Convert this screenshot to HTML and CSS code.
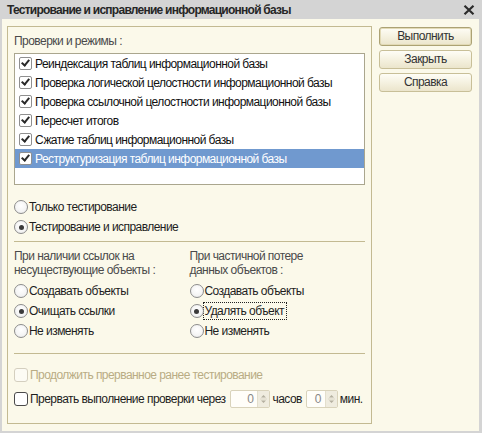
FILE: index.html
```html
<!DOCTYPE html>
<html lang="ru">
<head>
<meta charset="utf-8">
<title>Тестирование и исправление информационной базы</title>
<link rel="stylesheet" href="styles.css">
</head>
<body>
<div class="window">
  <div class="titlebar">
    <span class="title">Тестирование и исправление информационной базы</span>
    <svg class="close" width="12" height="10" viewBox="0 0 12 10"><path d="M1.5 0.8 L10.5 9.2 M10.5 0.8 L1.5 9.2" stroke="#2b2b2b" stroke-width="2.2" fill="none"/></svg>
  </div>
  <div class="body">
    <div class="panel">
      <div class="label">Проверки и режимы :</div>
      <div class="list">
        <div class="row"><span class="cb on"></span><span>Реиндексация таблиц информационной базы</span></div>
        <div class="row"><span class="cb on"></span><span>Проверка логической целостности информационной базы</span></div>
        <div class="row"><span class="cb on"></span><span>Проверка ссылочной целостности информационной базы</span></div>
        <div class="row"><span class="cb on"></span><span>Пересчет итогов</span></div>
        <div class="row"><span class="cb on"></span><span>Сжатие таблиц информационной базы</span></div>
        <div class="row selected"><span class="cb on"></span><span>Реструктуризация таблиц информационной базы</span></div>
      </div>
      <div class="modes">
        <div class="radio"><span class="rb"></span><span>Только тестирование</span></div>
        <div class="radio"><span class="rb on"></span><span>Тестирование и исправление</span></div>
      </div>
      <div class="sep"></div>
      <div class="cols">
        <div class="col">
          <div class="label2">При наличии ссылок на<br>несуществующие объекты :</div>
          <div class="radios">
            <div class="radio"><span class="rb"></span><span>Создавать объекты</span></div>
            <div class="radio"><span class="rb on"></span><span>Очищать ссылки</span></div>
            <div class="radio"><span class="rb"></span><span>Не изменять</span></div>
          </div>
        </div>
        <div class="col">
          <div class="label2">При частичной потере<br>данных объектов :</div>
          <div class="radios">
            <div class="radio"><span class="rb"></span><span>Создавать объекты</span></div>
            <div class="radio"><span class="rb on"></span><span class="focus">Удалять объект</span></div>
            <div class="radio"><span class="rb"></span><span>Не изменять</span></div>
          </div>
        </div>
      </div>
      <div class="sep sep2"></div>
      <div class="check disabled"><span class="box"></span><span>Продолжить прерванное ранее тестирование</span></div>
      <div class="check limit">
        <span class="box"></span><span>Прервать выполнение проверки через</span>
        <span class="spin w40"><span class="val">0</span><span class="arrows"><svg width="11" height="16" viewBox="0 0 11 16"><path d="M3 6.5 L5.5 4 L8 6.5 Z M3 9.5 L5.5 12 L8 9.5 Z" fill="#b4b0a0"/><path d="M2 8 H9" stroke="#dcd8c8" stroke-width="1"/></svg></span></span>
        <span class="unit">часов</span>
        <span class="spin w32"><span class="val">0</span><span class="arrows"><svg width="11" height="16" viewBox="0 0 11 16"><path d="M3 6.5 L5.5 4 L8 6.5 Z M3 9.5 L5.5 12 L8 9.5 Z" fill="#b4b0a0"/><path d="M2 8 H9" stroke="#dcd8c8" stroke-width="1"/></svg></span></span>
        <span class="unit">мин.</span>
      </div>
    </div>
    <div class="buttons">
      <div class="btn default">Выполнить</div>
      <div class="btn">Закрыть</div>
      <div class="btn">Справка</div>
    </div>
  </div>
</div>
</body>
</html>
```
FILE: styles.css
```css
html, body {
  margin: 0;
  padding: 0;
  background: #d4d4d4;
}
body {
  font-family: "Liberation Sans", Arial, sans-serif;
  font-size: 12px;
  letter-spacing: -0.55px;
  color: #1e1e1e;
}
.window {
  width: 482px;
  height: 433px;
  box-sizing: border-box;
  background: #d4d4d4;
  display: flex;
  flex-direction: column;
  padding: 0 3px 2px 2px;
}
.titlebar {
  height: 19px;
  flex: none;
  display: flex;
  align-items: center;
  justify-content: space-between;
  padding: 0 7px 0 7px;
  margin: 0 -3px 0 -2px;
}
.title {
  font-weight: bold;
  font-size: 12px;
  letter-spacing: -0.75px;
  color: #262626;
  padding-top: 1px;
}
.close {
  display: block;
  margin-top: 1px;
}
.body {
  flex: 1;
  background: #fbf9ea;
  display: flex;
  align-items: flex-start;
  padding: 7px 0 0 5px;
}
.panel {
  width: 365px;
  height: 398px;
  box-sizing: border-box;
  border: 1px solid #c3ba92;
  padding: 7px 6px 0 6px;
}
.label {
  height: 14px;
  line-height: 14px;
  color: #4a4a4a;
  margin-bottom: 5px;
}
.list {
  height: 132px;
  box-sizing: border-box;
  border: 1px solid #aaa68e;
  background: #fff;
}
.row {
  height: 19px;
  display: flex;
  align-items: center;
  color: #111;
  white-space: nowrap;
}
.row.selected {
  background: #7099cf;
  color: #fff;
}
.cb {
  width: 11px;
  height: 11px;
  border: 1px solid #8f8f8f;
  border-radius: 2px;
  background: #fff;
  margin: 0 3px 0 4px;
  flex: none;
  position: relative;
}
.cb.on::after {
  content: "";
  position: absolute;
  left: 3px;
  top: 0px;
  width: 3px;
  height: 6px;
  border: solid #2a2a2a;
  border-width: 0 2px 2px 0;
  transform: rotate(40deg);
}
.modes {
  margin-top: 12px;
}
.radio {
  height: 20px;
  display: flex;
  align-items: center;
  white-space: nowrap;
  color: #1e1e1e;
}
.rb {
  width: 12px;
  height: 12px;
  border: 1px solid #8c8c8c;
  border-radius: 50%;
  background: radial-gradient(circle at 50% 40%, #ffffff 0, #f4f4f4 60%, #e2e2e2 100%);
  margin-right: 1px;
  flex: none;
  position: relative;
}
.rb.on::after {
  content: "";
  position: absolute;
  left: 3.5px;
  top: 3.5px;
  width: 5px;
  height: 5px;
  border-radius: 50%;
  background: #3a3a3a;
}
.sep {
  height: 1px;
  background: #c3ba92;
  margin-top: 4px;
}
.cols {
  display: flex;
  margin-top: 7px;
}
.col {
  width: 178px;
}
.label2 {
  line-height: 14px;
  color: #4a4a4a;
}
.radios {
  margin-top: 4px;
}
.focus {
  outline: 1px dotted #222;
  outline-offset: 1px;
  padding-right: 1px;
}
.sep2 {
  margin-top: 12px;
}
.check {
  height: 20px;
  display: flex;
  align-items: center;
  white-space: nowrap;
}
.check .box {
  width: 12px;
  height: 12px;
  border: 1px solid #4a4a4a;
  border-radius: 3px;
  background: #fff;
  margin-right: 2px;
  flex: none;
}
.check.disabled {
  margin-top: 11px;
  color: #b9ac84;
}
.check.disabled .box {
  border-color: #d4cfbf;
  background: #fcfbf4;
}
.check.limit {
  margin-top: 4px;
  color: #1e1e1e;
}
.spin {
  height: 18px;
  box-sizing: border-box;
  border: 1px solid #d9d3bb;
  border-radius: 2px;
  background: #fffef9;
  display: flex;
  align-items: stretch;
  margin-left: 5px;
  flex: none;
}
.spin.w40 { width: 40px; }
.spin.w32 { width: 32px; margin-left: 4px; }
.val {
  flex: 1;
  text-align: right;
  line-height: 16px;
  color: #888;
  padding-right: 4px;
}
.arrows {
  width: 11px;
  background: #efecdf;
  border-left: 1px solid #e3dfcd;
  display: flex;
  align-items: center;
}
.arrows svg { display: block; }
.unit {
  margin-left: 2px;
}
.buttons {
  display: flex;
  flex-direction: column;
  margin-left: 7px;
  margin-top: 1px;
}
.btn {
  width: 93px;
  height: 19px;
  box-sizing: border-box;
  border: 1px solid #c8bf98;
  border-radius: 3px;
  background: linear-gradient(#fefdf6, #f3efdc 60%, #ebe5cc);
  text-align: center;
  line-height: 17px;
  color: #333;
  margin-bottom: 4px;
}
.btn.default {
  border-color: #aca274;
  box-shadow: inset 0 0 0 1px #e2dab6;
}
```
